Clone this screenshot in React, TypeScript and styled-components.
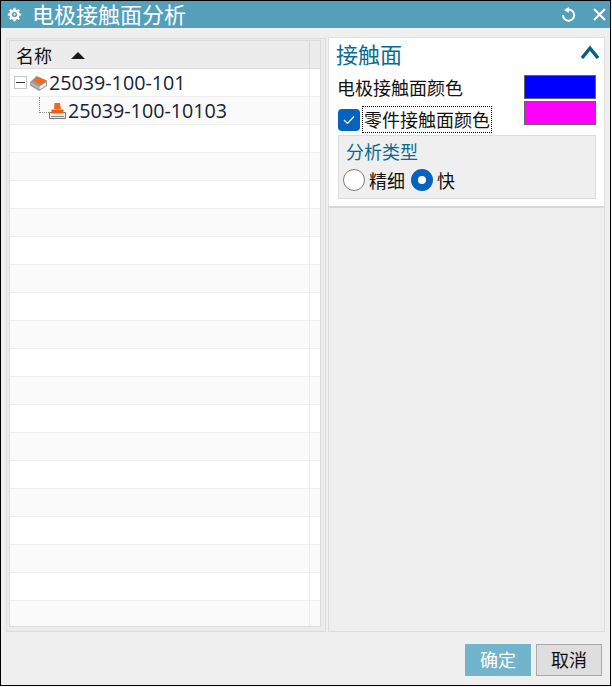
import React from "react";
import styled, { createGlobalStyle } from "styled-components";

const Global = createGlobalStyle`
  html, body { margin: 0; padding: 0; background: #efefef; }
  body { font-family: "Noto Sans CJK SC", "Noto Sans", sans-serif; }
  * { box-sizing: border-box; }
`;
const Dialog = styled.div`
  width: 611px; height: 686px; border: 1px solid #000;
  background: #efefef; display: flex; flex-direction: column; overflow: hidden;
`;
const TitleBar = styled.div`
  height: 27px; background: #549fb9; color: #fff; display: flex; align-items: center; padding: 0 3px 0 6px; flex: none;
`;
const TitleText = styled.div`
  font-size: 22px; line-height: 26px; margin: 0 0 4px 10px; flex: 1;
`;
const TitleButton = styled.span`
  display: flex; width: 16px; justify-content: center; margin-left: 14px;
`;
const Body = styled.div`
  flex: 1; display: flex; padding: 9px 5px 0 5px; gap: 2px; min-height: 0;
`;
const LeftOuter = styled.div`
  width: 320px; height: 594px; margin-top: 1px; border: 1px solid #dcdcdc; padding: 1px 4px 4px 2px; background: #ececec;
`;
const TreeBox = styled.div`
  height: 100%; border: 1px solid #dadada; background: #fff; display: flex; flex-direction: column; overflow: hidden;
`;
const Header = styled.div`
  height: 28px; flex: none; display: flex; background: #ececec; border-bottom: 1px solid #dcdcdc;
`;
const HeaderMain = styled.div`
  width: 300px; display: flex; align-items: center; padding-left: 6px; font-size: 18px; color: #111; border-right: 1px solid #d6d6d6;
`;
const SortArrow = styled.span`
  width: 0; height: 0; margin-left: 19px; margin-top: 1px; border-left: 7px solid transparent; border-right: 7px solid transparent; border-bottom: 7px solid #1a1a1a;
`;
const Row = styled.div<{ $alt: boolean }>`
  height: 28px; flex: none; display: flex; background: ${(p) => (p.$alt ? "#fafafa" : "#fff")}; border-bottom: 1px solid #eeeeee;
`;
const RowMain = styled.div<{ $indent: number }>`
  width: 300px; display: flex; align-items: center; padding-left: ${(p) => p.$indent}px; font-size: 19.7px; color: #15233a; border-right: 1px solid #ececec; position: relative; white-space: nowrap; font-family: "Open Sans", "Noto Sans", sans-serif;
`;
const Expander = styled.span`
  width: 13px; height: 13px; border: 1px solid #c8c8c8; background: #fff; display: flex; align-items: center; justify-content: center; margin-right: 3px; flex: none;
  &::after { content: ""; width: 9px; height: 1px; background: #333; }
`;
const Connector = styled.span`
  position: absolute; left: 29px; top: 0; width: 10px; height: 16px; border-left: 1px dotted #888; border-bottom: 1px dotted #888;
`;
const RowLabel = styled.span`
  margin-left: 2px;
`;
const Right = styled.div`
  flex: 1; display: flex; flex-direction: column; min-width: 0;
`;
const Section = styled.div`
  height: 171px; background: #fff; border: 1px solid #e0e0e0; border-bottom: 2px solid #d8d8d8; padding: 4px 8px 0 9px; flex: none;
`;
const SectionHead = styled.div`
  display: flex; justify-content: space-between; align-items: center; height: 27px; color: #0a6b90; font-size: 22px; line-height: 22px; margin-left: -2px;
`;
const SectionTitle = styled.span`
  margin-bottom: 5px;
`;
const ColorLine = styled.div`
  display: flex; align-items: center; justify-content: space-between; height: 24px; margin-top: 6px; margin-left: -1px; font-size: 18px; color: #111;
`;
const CheckLine = styled.div`
  display: flex; align-items: flex-start; justify-content: space-between; height: 32px; margin-top: 2px; font-size: 18px; color: #111;
`;
const Swatch = styled.span<{ $color: string }>`
  width: 72px; height: 24px; background: ${(p) => p.$color}; border: 1px solid #666; flex: none;
`;
const CheckGroup = styled.div`
  display: flex; align-items: center; gap: 2px; margin-top: 5px;
`;
const CheckBox = styled.span`
  width: 22px; height: 22px; background: #0663bd; border-radius: 4px; display: flex; align-items: center; justify-content: center; flex: none;
`;
const FocusLabel = styled.span`
  border: 1px dotted #000; height: 27px; line-height: 25px; padding: 0 1px; font-size: 18px; color: #111;
`;
const GroupBox = styled.div`
  margin-top: 2px; width: 258px; height: 64px; background: #efefef; border: 1px solid #dcdcdc; padding: 3px 4px 0 4px;
`;
const GroupTitle = styled.div`
  color: #0a6b90; font-size: 18px; line-height: 24px; padding-left: 3px;
`;
const RadioLine = styled.div`
  display: flex; align-items: center; height: 30px; margin-top: 2px; font-size: 18px; color: #111;
`;
const RadioOff = styled.span`
  width: 22px; height: 22px; border-radius: 50%; border: 1px solid #7c7c7c; background: #fff; flex: none; margin-right: 4px;
`;
const RadioOn = styled.span`
  width: 22px; height: 22px; border-radius: 50%; border: 7px solid #0663bd; background: #fff; flex: none; margin: 0 4px 0 6px;
`;
const Rest = styled.div`
  flex: 1; border: 1px solid #dcdcdc; border-top: none; background: #efefef;
`;
const Footer = styled.div`
  height: 53px; flex: none; display: flex; justify-content: flex-end; align-items: flex-start; padding: 12px 8px 0 0; gap: 5px;
`;
const PrimaryButton = styled.div`
  width: 66px; height: 32px; padding-bottom: 2px; background: #72b4cb; color: #fff; font-size: 18px; display: flex; align-items: center; justify-content: center;
`;
const SecondaryButton = styled.div`
  width: 66px; height: 32px; padding-bottom: 2px; background: #dedede; border: 1px solid #a9a9a9; color: #111; font-size: 18px; display: flex; align-items: center; justify-content: center;
`;

const Gear = () => (
  <svg width="15" height="15" viewBox="0 0 15 15">
    <circle cx="7.5" cy="7.5" r="3.9" fill="none" stroke="#fff" strokeWidth="2.6" />
    <circle cx="7.5" cy="7.5" r="1" fill="#fff" />
    <path d="M7.5 .8v3M7.5 11.2v3M.8 7.5h3M11.2 7.5h3M2.8 2.8l2 2M10.2 10.2l2 2M12.2 2.8l-2 2M4.8 10.2l-2 2" stroke="#fff" strokeWidth="2.2" />
  </svg>
);
const Reset = () => (
  <svg width="16" height="15" viewBox="0 0 16 15" fill="none">
    <path d="M5.4 3a5.6 5.6 0 1 1-3.4 5" stroke="#fff" strokeWidth="2" />
    <path d="M7.8 0v6L3 3z" fill="#fff" />
  </svg>
);
const Close = () => (
  <svg width="13" height="13" viewBox="0 0 13 13">
    <path d="M1 1l11 11M12 1L1 12" stroke="#fff" strokeWidth="2" />
  </svg>
);
const ChevronSvg = styled.svg`
  margin-right: -4px; margin-bottom: 8px; flex: none;
`;
const Chevron = () => (
  <ChevronSvg width="20" height="14" viewBox="0 0 20 14">
    <path d="M2 13L10 3.2 18 13" fill="none" stroke="#0a6080" strokeWidth="3.4" />
  </ChevronSvg>
);
const Check = () => (
  <svg width="12" height="10" viewBox="0 0 12 10">
    <path d="M1 5l3.5 3.5L11 1.5" fill="none" stroke="#fff" strokeWidth="1.2" />
  </svg>
);
const TreeIcon = styled.svg`
  flex: none;
`;
const PartIcon = () => (
  <TreeIcon width="17" height="17" viewBox="0 0 17 17">
    <path d="M0 8L6.5 2 17 6.5V12L9 17 0 11.5z" fill="#9c9c9c" />
    <path d="M9.5 12.5L16 8.5V11.5L9.5 15.5z" fill="#eeeeee" />
    <path d="M1 8.5L8.5 13V14.5L1 10z" fill="#c4c4c4" />
    <path d="M3.5 7L7 2.5 16.5 6.5 11 11z" fill="#f2691d" />
  </TreeIcon>
);
const ChildIcon = () => (
  <TreeIcon width="17" height="17" viewBox="0 0 17 17">
    <path d="M.5 10.5h16v6H.5z" fill="#ececec" stroke="#777" />
    <path d="M5.5 1h5.5l1 6h-7z" fill="#f2691d" />
    <path d="M2.5 7.5h12v4h-12z" fill="#e95f16" />
    <path d="M2 14.5h13" stroke="#888" />
  </TreeIcon>
);

export default function App() {
  const rows = Array.from({ length: 20 }, (_, i) => i);
  return (
    <>
      <Global />
      <Dialog>
        <TitleBar>
          <Gear />
          <TitleText>电极接触面分析</TitleText>
          <TitleButton><Reset /></TitleButton>
          <TitleButton><Close /></TitleButton>
        </TitleBar>
        <Body>
          <LeftOuter>
            <TreeBox>
              <Header>
                <HeaderMain>名称<SortArrow /></HeaderMain>
              </Header>
              {rows.map((i) => (
                <Row key={i} $alt={i % 2 === 1}>
                  <RowMain $indent={i === 1 ? 39 : 4}>
                    {i === 0 && (<><Expander /><PartIcon /><RowLabel>25039-100-101</RowLabel></>)}
                    {i === 1 && (<><Connector /><ChildIcon /><RowLabel>25039-100-10103</RowLabel></>)}
                  </RowMain>
                </Row>
              ))}
            </TreeBox>
          </LeftOuter>
          <Right>
            <Section>
              <SectionHead><SectionTitle>接触面</SectionTitle><Chevron /></SectionHead>
              <ColorLine>电极接触面颜色<Swatch $color="#0000ff" /></ColorLine>
              <CheckLine>
                <CheckGroup><CheckBox><Check /></CheckBox><FocusLabel>零件接触面颜色</FocusLabel></CheckGroup>
                <Swatch $color="#ff00ff" />
              </CheckLine>
              <GroupBox>
                <GroupTitle>分析类型</GroupTitle>
                <RadioLine><RadioOff />精细<RadioOn />快</RadioLine>
              </GroupBox>
            </Section>
            <Rest />
          </Right>
        </Body>
        <Footer>
          <PrimaryButton>确定</PrimaryButton>
          <SecondaryButton>取消</SecondaryButton>
        </Footer>
      </Dialog>
    </>
  );
}
